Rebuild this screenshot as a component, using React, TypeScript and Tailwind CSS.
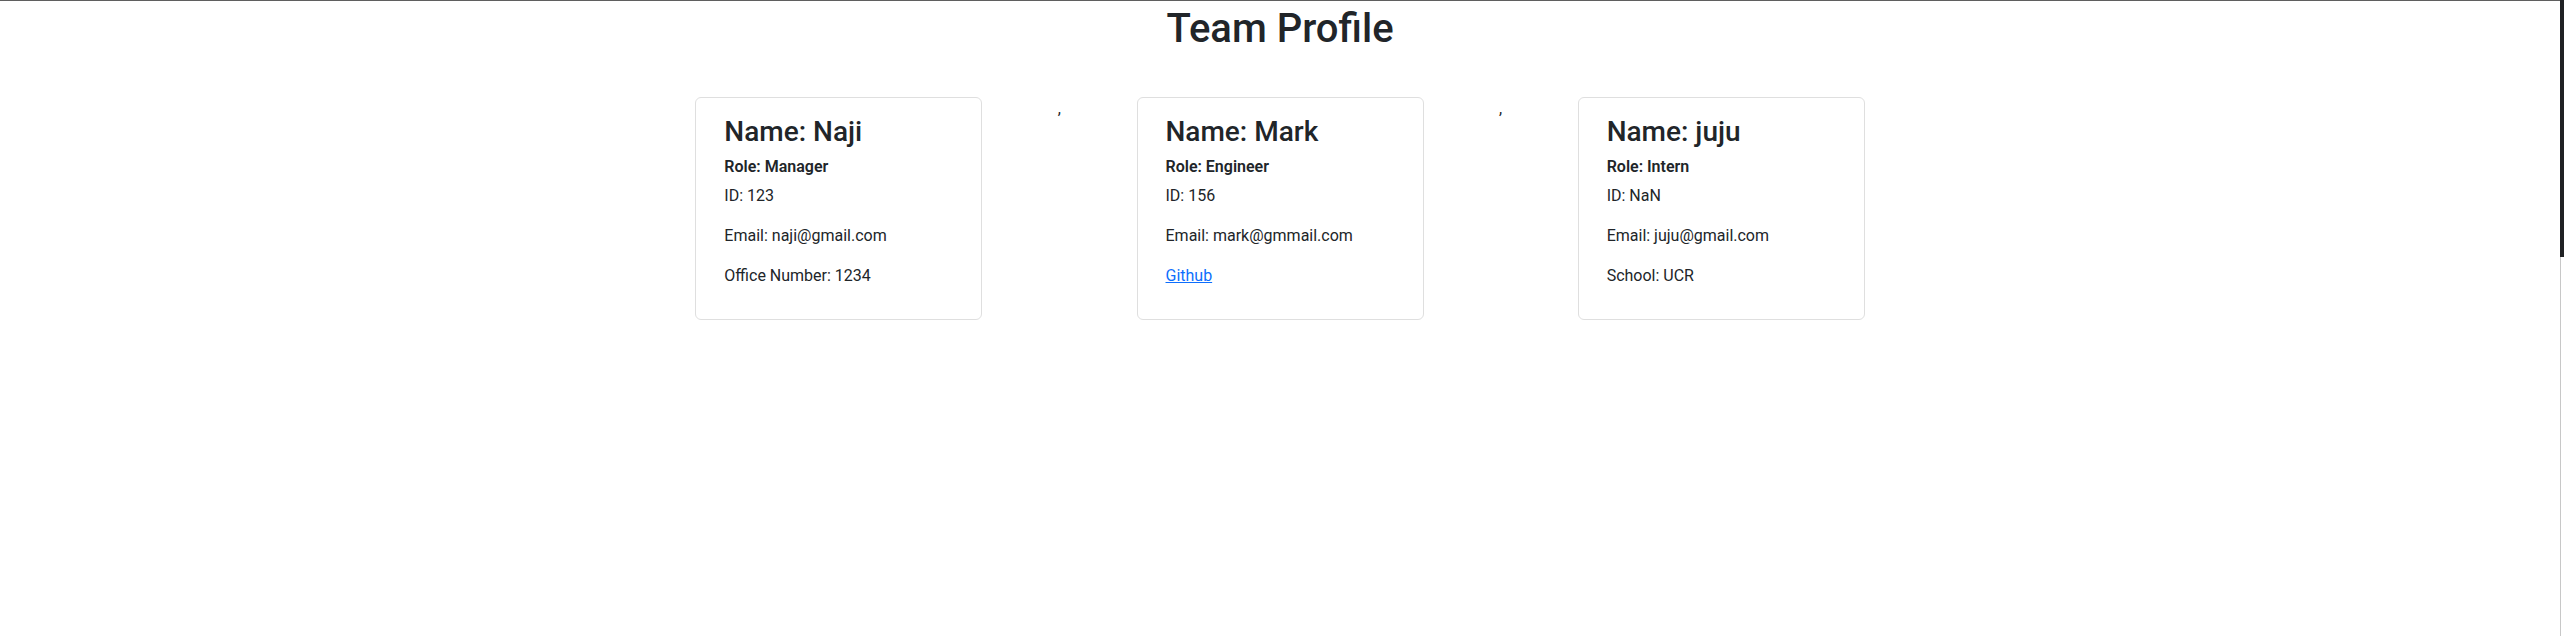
type Member = {
  name: string
  role: string
  id: string
  email: string
  extra: { kind: 'text' | 'link'; label: string }
}

const team: Member[] = [
  { name: 'Naji', role: 'Manager', id: '123', email: 'naji@gmail.com', extra: { kind: 'text', label: 'Office Number: 1234' } },
  { name: 'Mark', role: 'Engineer', id: '156', email: 'mark@gmmail.com', extra: { kind: 'link', label: 'Github' } },
  { name: 'juju', role: 'Intern', id: 'NaN', email: 'juju@gmail.com', extra: { kind: 'text', label: 'School: UCR' } },
]

function Card({ m }: { m: Member }) {
  return (
    <div className="w-[287px] rounded-[6px] border border-[#dfdfdf] px-[28px] pt-[17px] pb-[15px]">
      <h3 className="mb-2 text-[28px] leading-[1.2] font-medium">Name: {m.name}</h3>
      <h6 className="mb-2 text-[16px] leading-[1.2] font-semibold">Role: {m.role}</h6>
      <p className="mb-4 text-[16px] leading-[1.5]">ID: {m.id}</p>
      <p className="mb-4 text-[16px] leading-[1.5]">Email: {m.email}</p>
      {m.extra.kind === 'link' ? (
        <p className="mb-4 text-[16px] leading-[1.5]">
          <a href="#" className="text-[#0d6efd] underline">
            {m.extra.label}
          </a>
        </p>
      ) : (
        <p className="mb-4 text-[16px] leading-[1.5]">{m.extra.label}</p>
      )}
    </div>
  )
}

export default function App() {
  return (
    <div className="flex min-h-[636px] bg-white text-[#212529]" style={{ fontFamily: 'Roboto, sans-serif' }}>
      <div className="flex-1 border-t border-[#5f5f5f]">
        <h1 className="mt-1 text-center text-[40px] leading-[1.2] font-medium">Team Profile</h1>
        {/* cards, with the stray commas from the joined array */}
        <div className="mt-[44px] flex items-start justify-center gap-[75.5px]">
          <Card m={team[0]} />
          <span className="text-[16px] leading-[1.5]">,</span>
          <Card m={team[1]} />
          <span className="text-[16px] leading-[1.5]">,</span>
          <Card m={team[2]} />
        </div>
      </div>
      {/* window edge on the right */}
      <div className="flex w-[4px] flex-col">
        <div className="h-[257px] bg-[#202124]" />
        <div className="w-[1px] flex-1 bg-[#c8c8c8]" />
      </div>
    </div>
  )
}
